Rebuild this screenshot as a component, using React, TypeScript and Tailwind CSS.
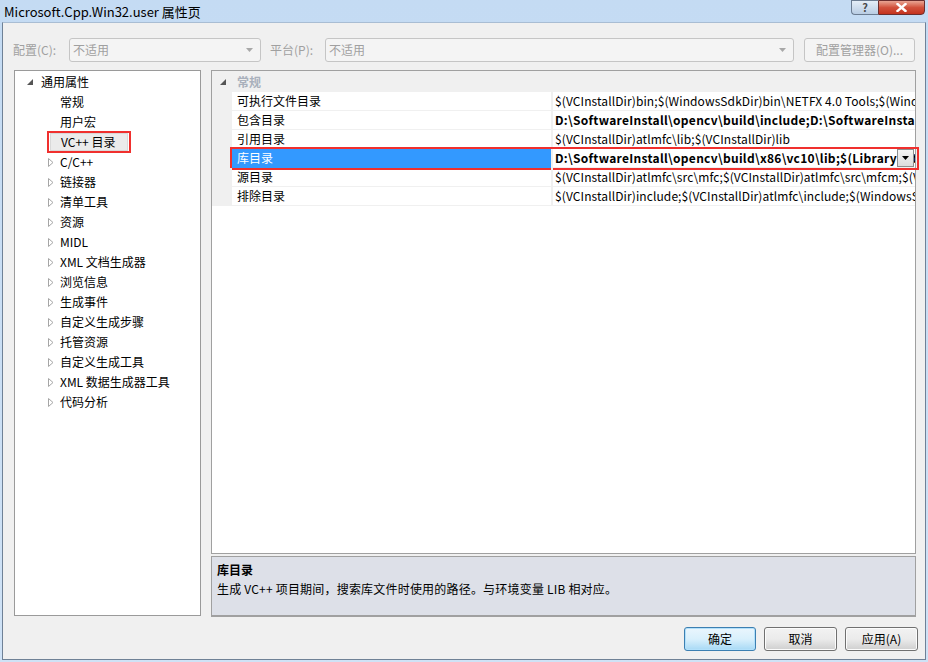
import React from "react";

const Collapsed = () => (
  <svg width="6" height="9" viewBox="0 0 6 9" className="block">
    <path d="M0.5 0.5 L5 4.5 L0.5 8.5 Z" fill="white" stroke="#a6a6a6" strokeWidth="1" />
  </svg>
);

const Expanded = () => (
  <svg width="6" height="6" viewBox="0 0 6 6" className="block">
    <path d="M6 0 L6 6 L0 6 Z" fill="#555" />
  </svg>
);

const ComboArrow = () => (
  <svg width="7" height="4" viewBox="0 0 7 4" className="block">
    <path d="M0 0 L7 0 L3.5 4 Z" fill="#a8a8a8" />
  </svg>
);

type TreeItem = { label: string; leaf?: boolean; selected?: boolean };

const children: TreeItem[] = [
  { label: "常规", leaf: true },
  { label: "用户宏", leaf: true },
  { label: "VC++ 目录", leaf: true, selected: true },
  { label: "C/C++" },
  { label: "链接器" },
  { label: "清单工具" },
  { label: "资源" },
  { label: "MIDL" },
  { label: "XML 文档生成器" },
  { label: "浏览信息" },
  { label: "生成事件" },
  { label: "自定义生成步骤" },
  { label: "托管资源" },
  { label: "自定义生成工具" },
  { label: "XML 数据生成器工具" },
  { label: "代码分析" },
];

const rows = [
  { name: "可执行文件目录", value: "$(VCInstallDir)bin;$(WindowsSdkDir)bin\\NETFX 4.0 Tools;$(WindowsSdkDir)bin;$(VSInstallDir)Common7\\Tools\\bin", bold: false },
  { name: "包含目录", value: "D:\\SoftwareInstall\\opencv\\build\\include;D:\\SoftwareInstall\\opencv\\build\\include\\opencv", bold: true },
  { name: "引用目录", value: "$(VCInstallDir)atlmfc\\lib;$(VCInstallDir)lib", bold: false },
  { name: "库目录", value: "D:\\SoftwareInstall\\opencv\\build\\x86\\vc10\\lib;$(LibraryPath)", bold: true, selected: true },
  { name: "源目录", value: "$(VCInstallDir)atlmfc\\src\\mfc;$(VCInstallDir)atlmfc\\src\\mfcm;$(VCInstallDir)atlmfc\\src\\atl", bold: false },
  { name: "排除目录", value: "$(VCInstallDir)include;$(VCInstallDir)atlmfc\\include;$(WindowsSdkDir)include;$(FrameworkSDKDir)include", bold: false },
];

export default function App() {
  return (
    <div className="w-[928px] h-[662px] relative overflow-hidden flex flex-col bg-gradient-to-b from-[#c4dbf3] to-[#cfe2f6] font-['Noto_Sans_CJK_SC',sans-serif] text-[12px] text-black leading-none">
      {/* title bar */}
      <div className="h-[22px] flex items-center pl-[4px] text-[13px] text-black shrink-0">
        Microsoft.Cpp.Win32.user 属性页
      </div>
      <div className="absolute top-0 right-[3px] flex">
        <div className="w-[27px] h-[15px] border border-[#6b7c91] border-r-0 rounded-bl-[4px] bg-gradient-to-b from-[#e4edf7] to-[#b9cde3] flex items-center justify-center text-[11px] font-bold text-[#4a4a4a]">
          ?
        </div>
        <div className="w-[47px] h-[15px] border border-[#6b2e2e] rounded-br-[4px] bg-gradient-to-b from-[#e8a493] via-[#d1513c] to-[#c4321d] flex items-center justify-center">
          <svg width="11" height="9" viewBox="0 0 11 9">
            <path d="M1.5 1 L9.5 8 M9.5 1 L1.5 8" stroke="#fff" strokeWidth="2.4" strokeLinecap="square" />
          </svg>
        </div>
      </div>

      {/* client */}
      <div className="ml-[2px] w-[924px] h-[638px] border border-[#6f8196] border-t-[#a9bdd3] bg-[#f0f0f0] flex flex-col">
        {/* top row */}
        <div className="mt-[15px] h-[24px] flex items-center pl-[10px] text-[#a0a0a0]">
          <div className="w-[56px]">配置(C):</div>
          <div className="w-[192px] h-[24px] border border-[#c5c5c5] rounded-[3px] bg-[#f4f4f4] flex items-center justify-between pl-[3px] pr-[7px]">
            <span>不适用</span>
            <ComboArrow />
          </div>
          <div className="w-[64px] pl-[9px]">平台(P):</div>
          <div className="w-[469px] h-[24px] border border-[#c5c5c5] rounded-[3px] bg-[#f4f4f4] flex items-center justify-between pl-[3px] pr-[7px]">
            <span>不适用</span>
            <ComboArrow />
          </div>
          <div className="ml-[10px] w-[111px] h-[24px] border border-[#c5c5c5] rounded-[3px] bg-[#f4f4f4] flex items-center justify-center">
            配置管理器(O)...
          </div>
        </div>

        {/* main */}
        <div className="mt-[8px] h-[547px] flex pl-[11px]">
          {/* tree */}
          <div className="w-[187px] h-[546px] border border-[#9a9a9a] bg-white pt-[1px]">
            <div className="h-[20px] flex items-center pl-[12px]">
              <div className="w-[14px]"><Expanded /></div>
              <span>通用属性</span>
            </div>
            {children.map((c) => (
              <div key={c.label} className="h-[20px] flex items-center pl-[33px]">
                <div className="w-[12px]">{c.leaf ? null : <Collapsed />}</div>
                {c.selected ? (
                  <span className="relative -ml-[10px] h-[18px] w-[78px] pl-[10px] flex items-center bg-[#ebebeb] border border-[#d9d9d9]">
                    {c.label}
                    <span className="absolute -left-[4px] -right-[4px] -top-[3px] -bottom-[3px] border-2 border-[#f0302e]" />
                  </span>
                ) : (
                  <span>{c.label}</span>
                )}
              </div>
            ))}
          </div>

          {/* right pane */}
          <div className="ml-[10px] w-[705px] flex flex-col">
            <div className="h-[485px] border border-[#a0a0a0] bg-white flex flex-col">
              <div className="h-[21px] shrink-0 bg-[#f0f0f0] flex items-center pl-[8px]">
                <div className="w-[17px] mt-[1px]"><Expanded /></div>
                <span className="text-[#a9b0bc] font-bold">常规</span>
              </div>
              {rows.map((r) => (
                <div key={r.name} className="h-[19px] shrink-0 flex relative">
                  <div className="w-[20px] bg-[#f0f0f0]" />
                  <div
                    className={
                      "w-[319px] border-b border-[#f0f0f0] flex items-center pl-[5px] " +
                      (r.selected ? "bg-[#3399ff] text-white border-b-[#3399ff]" : "")
                    }
                  >
                    {r.name}
                  </div>
                  <div className="w-[2px] bg-[#f0f0f0]" />
                  <div
                    className={
                      "flex-1 min-w-0 border-b border-[#f0f0f0] flex items-center pl-[2px] overflow-hidden whitespace-nowrap relative " +
                      (r.bold ? "font-bold tracking-[0.3px]" : "tracking-[0.1px]")
                    }
                  >
                    {r.value}
                    {r.selected ? (
                      <div className="absolute right-[1px] top-[0px] w-[17px] h-[18px] border border-[#8e8f8f] bg-gradient-to-b from-[#f5f5f5] to-[#dcdcdc] flex items-center justify-center">
                        <svg width="7" height="4" viewBox="0 0 7 4">
                          <path d="M0 0 L7 0 L3.5 4 Z" fill="#000" />
                        </svg>
                      </div>
                    ) : null}
                  </div>
                  {r.selected ? (
                    <div className="absolute left-[18px] -right-[4px] -top-[2px] -bottom-[2px] border-2 border-[#f0302e]" />
                  ) : null}
                </div>
              ))}
            </div>
            <div className="mt-[2px] h-[61px] border border-[#a0a0a0] border-b-2 bg-[#dde0e8] pl-[5px] pt-[4px]">
              <div className="h-[18px] flex items-center font-bold">库目录</div>
              <div className="h-[20px] flex items-center tracking-[0.2px]">生成 VC++ 项目期间，搜索库文件时使用的路径。与环境变量 LIB 相对应。</div>
            </div>
          </div>
        </div>

        {/* buttons */}
        <div className="mt-[10px] h-[24px] flex justify-end pr-[7px] gap-[8px]">
          <div className="w-[72px] h-[24px] rounded-[3px] border border-[#3c7fb1] bg-gradient-to-b from-[#eaf6fd] via-[#d9f0fc] to-[#a7d9f5] flex items-center justify-center shadow-[inset_0_0_0_1px_#b2e0fb]">
            确定
          </div>
          <div className="w-[73px] h-[24px] rounded-[3px] border border-[#707070] bg-gradient-to-b from-[#f2f2f2] via-[#ebebeb] to-[#cfcfcf] flex items-center justify-center shadow-[inset_0_0_0_1px_#fcfcfc]">
            取消
          </div>
          <div className="w-[73px] h-[24px] rounded-[3px] border border-[#707070] bg-gradient-to-b from-[#f2f2f2] via-[#ebebeb] to-[#cfcfcf] flex items-center justify-center shadow-[inset_0_0_0_1px_#fcfcfc]">
            应用(A)
          </div>
        </div>
      </div>
    </div>
  );
}
